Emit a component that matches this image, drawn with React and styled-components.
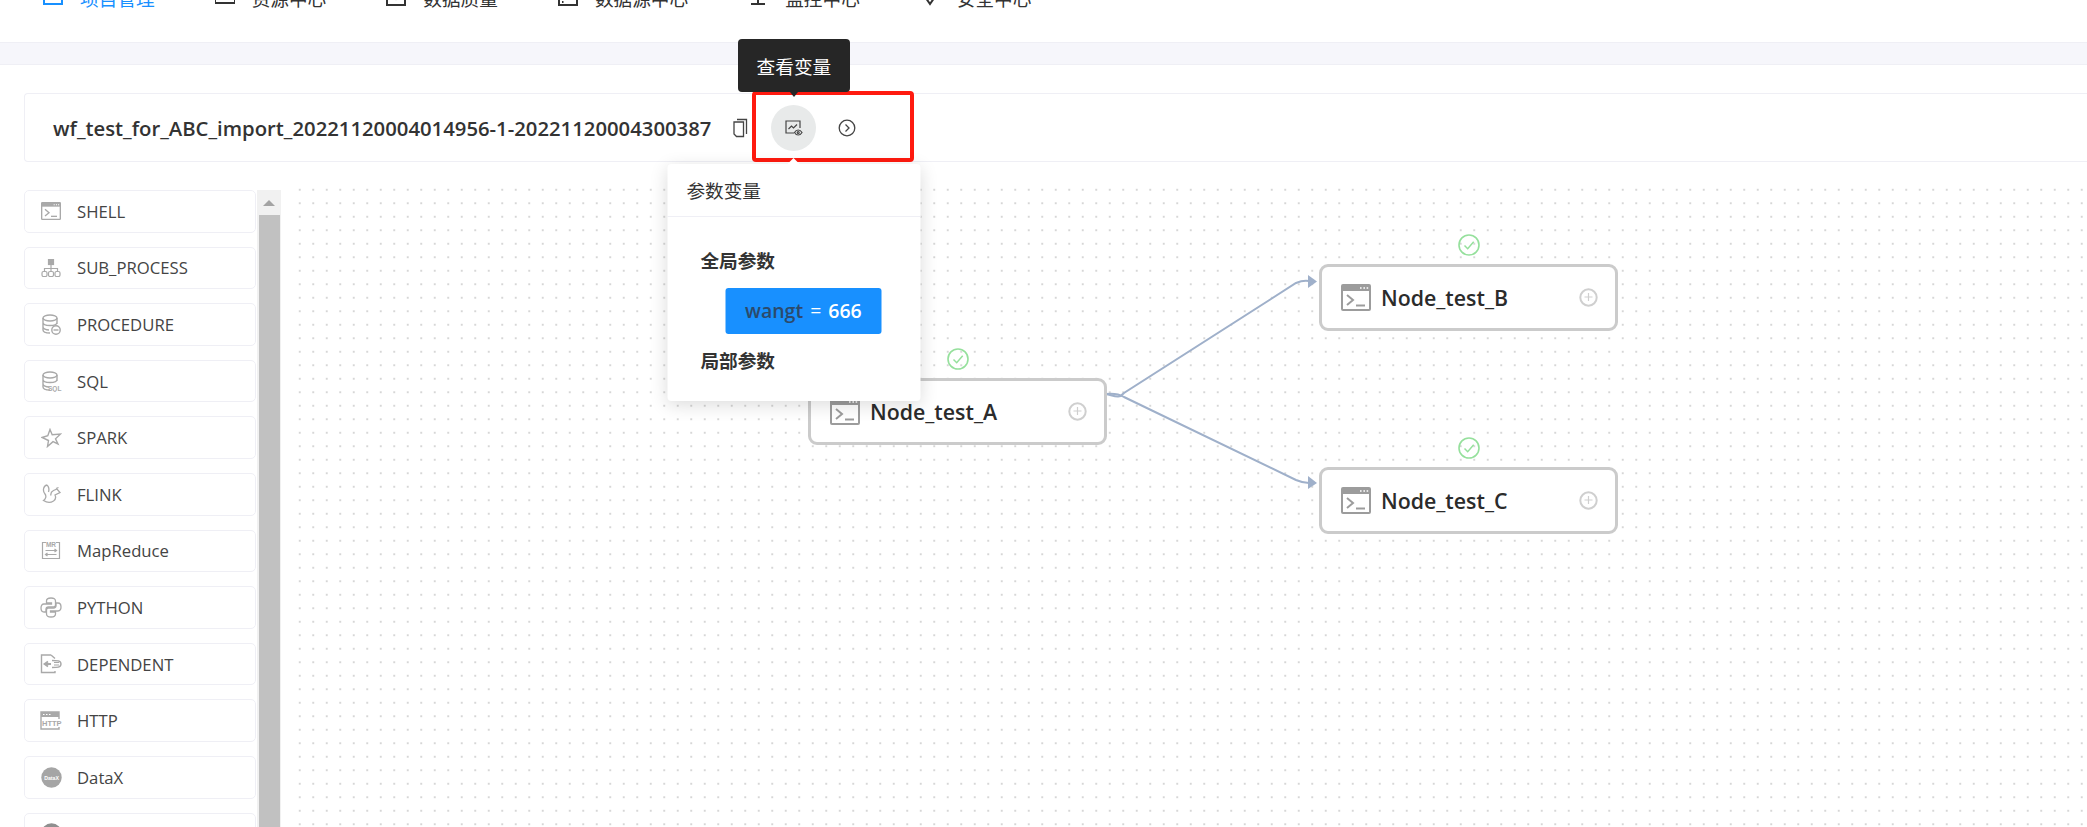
import React from 'react';
import styled, { createGlobalStyle } from 'styled-components';

const GlobalStyle = createGlobalStyle`
    html, body {
        margin: 0;
        background: #fff;
        overflow: hidden;
    }
    * {
        box-sizing: border-box;
    }
`

const FONT = `"Open Sans", "Noto Sans CJK SC", sans-serif`;

const Page = styled.div`
    height: 827px;
    width: 2087px;
    overflow: hidden;
    display: flex;
    flex-direction: column;
    font-family: ${FONT};
    color: #333;
`

const NavBar = styled.nav`
    flex: none;
    height: 42px;
    overflow: hidden;
    display: flex;
    align-items: flex-end;
    gap: 60px;
    padding: 0 0 31px 43px;
`

const NavItem = styled.div`
    display: flex;
    align-items: center;
    gap: 17px;
    height: 24px;
    font-size: 18.67px;
    line-height: 24px;
    white-space: nowrap;
    color: ${p => (p.$active ? '#1890ff' : '#333')};

    svg {
        flex: none;
    }
`

const Strip = styled.div`
    flex: none;
    height: 23px;
    background: #f6f6fb;
    border-top: 1px solid #efeff5;
    border-bottom: 1px solid #efeff5;
`

const Content = styled.main`
    flex: 1;
    min-height: 0;
    display: flex;
    flex-direction: column;
    padding: 28px 0 0 24px;
`

const TitleCard = styled.div`
    position: relative;
    flex: none;
    height: 69px;
    display: flex;
    align-items: center;
    padding-left: 28px;
    border: 1px solid #efeff5;
    border-right: none;
    border-radius: 4px 0 0 4px;
`

const Title = styled.h1`
    margin: 0 19px 0 0;
    font-size: 20.3px;
    font-weight: 600;
    color: #333;
    white-space: nowrap;
`

const RoundButton = styled.div`
    position: relative;
    flex: none;
    width: 45px;
    height: 46px;
    margin-left: ${p => p.$left}px;
    border-radius: 50%;
    display: flex;
    align-items: center;
    justify-content: center;
    background: ${p => (p.$active ? '#e8eaea' : 'transparent')};
`

const Tooltip = styled.div`
    position: absolute;
    z-index: 3;
    left: 50%;
    bottom: calc(100% + 13px);
    transform: translateX(-50%);
    width: 112px;
    height: 53px;
    border-radius: 4px;
    background: #262626;
    color: #fff;
    font-size: 18.67px;
    display: flex;
    align-items: center;
    justify-content: center;
    white-space: nowrap;

    &::after {
        content: '';
        position: absolute;
        left: 50%;
        top: 100%;
        margin-left: -4px;
        border: 4px solid transparent;
        border-top: 5px solid #262626;
    }
`

const Popover = styled.div`
    position: absolute;
    z-index: 4;
    left: 50%;
    top: calc(100% + 13px);
    transform: translateX(-50%);
    width: 253px;
    height: 237px;
    border-radius: 4px;
    background: #fff;
    box-shadow: 0 4px 18px rgba(0, 0, 0, 0.14);

    &::before {
        content: '';
        position: absolute;
        left: 50%;
        bottom: 100%;
        margin-left: -6px;
        border: 6px solid transparent;
        border-top: none;
        border-bottom: 6px solid #fff;
    }
`

const PopoverHeader = styled.div`
    height: 53px;
    padding-left: 19px;
    display: flex;
    align-items: center;
    font-size: 18.67px;
    color: #333;
    border-bottom: 1px solid #efeff5;
`

const PopoverBody = styled.div`
    padding: 26px 0 0 33px;
    display: flex;
    flex-direction: column;
    align-items: flex-start;
`

const ParamHeading = styled.div`
    font-size: 18.67px;
    font-weight: 700;
    line-height: 36px;
    height: 36px;
    margin-top: ${p => p.$top || 0}px;
    color: #333;
`

const ParamTag = styled.div`
    margin: 9px 0 0 25px;
    width: 156px;
    height: 46px;
    border-radius: 3px;
    background: #1890ff;
    display: flex;
    align-items: center;
    justify-content: center;
    gap: 7px;
    font-size: 19.5px;
    font-weight: 600;
    color: #fff;
`

const ParamName = styled.span`
    color: #2c4a6b;
`

const ParamEquals = styled.span`
    font-weight: 400;
`

const RedFrame = styled.div`
    position: absolute;
    z-index: 2;
    left: 727px;
    top: -3px;
    width: 162px;
    height: 71px;
    border: 4px solid #ff1a0f;
    border-radius: 4px;
    pointer-events: none;
`

const Workspace = styled.div`
    flex: 1;
    min-height: 0;
    display: flex;
    margin-top: 21px;
`

const Sidebar = styled.div`
    flex: none;
    width: 232px;
    margin-top: 7px;
    display: flex;
    flex-direction: column;
    gap: 14px;
    overflow: hidden;
`

const TaskItem = styled.div`
    flex: none;
    height: 42.6px;
    display: flex;
    align-items: center;
    gap: 15px;
    padding-left: 15px;
    border: 1px solid #efeff5;
    border-radius: 5px;
    font-size: 16.7px;
    color: #444;
`

const TaskIcon = styled.span`
    flex: none;
    width: 22px;
    height: 22px;
    display: flex;
    align-items: center;
    justify-content: center;
`

const ScrollTrack = styled.div`
    flex: none;
    width: 24px;
    margin: 7px 0 0 1px;
    background: #f1f1f1;
    display: flex;
    flex-direction: column;
    align-items: center;
`

const ScrollArrow = styled.div`
    flex: none;
    height: 25px;
    display: flex;
    align-items: center;
    justify-content: center;

    &::before {
        content: '';
        border: 6px solid transparent;
        border-top: none;
        border-bottom: 6px solid #a3a3a3;
    }
`

const ScrollThumb = styled.div`
    flex: 1;
    width: 21px;
    background: #c1c1c1;
`

const Canvas = styled.div`
    position: relative;
    flex: 1;
    margin-left: 12px;
    background-image: radial-gradient(circle at center, #bcbcbc 0, #cccccc 0.6px, transparent 1px);
    background-size: 13.5px 13.5px;
`

const Edges = styled.svg`
    position: absolute;
    left: 0;
    top: 0;
    width: 100%;
    height: 100%;
`

const Node = styled.div`
    position: absolute;
    left: ${p => p.$x}px;
    top: ${p => p.$y}px;
    width: 299px;
    height: 67px;
    background: #fff;
    border: 3px solid #cbcbcb;
    border-radius: 9px;
    display: flex;
    align-items: center;
    padding: 0 17px 0 19px;
    gap: 10px;
`

const NodeLabel = styled.span`
    flex: 1;
    font-size: 21.33px;
    font-weight: 600;
    color: #2b2b2b;
    white-space: nowrap;
`

const NodeStatus = styled.span`
    position: absolute;
    left: 50%;
    top: -33px;
    margin-left: -11px;
    width: 22px;
    height: 22px;
    display: flex;
`

const ShellIcon = ({ w = 30, h = 27, color = '#9c9c9c' }) => (
    <svg width={w} height={h} viewBox="0 0 30 27" fill="none">
        <rect x="1" y="1" width="28" height="25" rx="1" stroke={color} strokeWidth="2" />
        <rect x="1" y="1" width="28" height="6" fill={color} />
        <path d="M19 4h1.6M22.4 4H24M25.6 4h1.6" stroke="#fff" strokeWidth="1.6" />
        <path d="M6 11l6 5-6 5" stroke={color} strokeWidth="2" />
        <path d="M15 21.5h9" stroke={color} strokeWidth="2" />
    </svg>
)

const PlusCircle = () => (
    <svg width="19" height="19" viewBox="0 0 19 19" fill="none" stroke="#cfcfcf">
        <circle cx="9.5" cy="9.5" r="8.2" strokeWidth="2" />
        <path d="M9.5 5v8M5.5 9h8" strokeWidth="1.2" />
    </svg>
)

const CheckCircle = () => (
    <svg width="22" height="22" viewBox="0 0 22 22" fill="none" stroke="#95e09c">
        <circle cx="11" cy="11" r="10" strokeWidth="1.6" />
        <path d="M6.5 11.5l3.2 3.2 6-7" strokeWidth="1.5" />
    </svg>
)

const GRAY = '#a9a9a9';

const PYTHON_HALF = 'M11 1C8 1 6.500 2 6.500 4V6H11.500V7H4C2 7 1 8.500 1 11C1 13.500 2 15 4 15H6V12.500C6 11 7 10 8.500 10H13.500C14.800 10 15.500 9 15.500 8V4C15.500 2 14 1 11 1Z';

const dbPaths = (
    <>
        <ellipse cx="9" cy="4" rx="7" ry="3" />
        <path d="M2 4v12c0 1.700 3 3 7 3M16 4v6M2 8.500c0 1.700 3 3 7 3s7-1.300 7-3M2 13c0 1.700 3 3 6 3" />
    </>
)

const taskIcons = {
    shell: <ShellIcon w={20} h={18} color={GRAY} />,
    sub: (
        <svg width="20" height="18" viewBox="0 0 20 18" fill="none" stroke={GRAY} strokeWidth="1.200">
            <rect x="7.500" y="0.500" width="5" height="5" fill={GRAY} />
            <path d="M10 5.500v4M3.500 12V9.500h13V12M10 9.500V12" />
            <rect x="1" y="12.500" width="5" height="5" rx="1.500" />
            <rect x="7.500" y="12.500" width="5" height="5" rx="1.500" />
            <rect x="14" y="12.500" width="5" height="5" rx="1.500" />
        </svg>
    ),
    procedure: (
        <svg width="20" height="21" viewBox="0 0 20 21" fill="none" stroke={GRAY} strokeWidth="1.400">
            {dbPaths}
            <circle cx="15" cy="16" r="4.200" fill="#fff" />
            <path d="M12.500 16h5" />
        </svg>
    ),
    sql: (
        <svg width="21" height="21" viewBox="0 0 21 21" fill="none" stroke={GRAY} strokeWidth="1.400">
            {dbPaths}
            <text x="7" y="20" fontSize="6.500" fontWeight="700" fill={GRAY} stroke="none" fontFamily="Liberation Sans, sans-serif">SQL</text>
        </svg>
    ),
    spark: (
        <svg width="21" height="20" viewBox="0 0 21 20" fill="none" stroke={GRAY} strokeWidth="1.400">
            <path d="M9 1.500l2.200 5.300 8.300-0.800-5 4.800 2.500 5.200-5-2.300-5.500 4.800 1-6L1 9.500l5.800-1.800z" />
        </svg>
    ),
    flink: (
        <svg width="21" height="20" viewBox="0 0 21 20" fill="none" stroke={GRAY} strokeWidth="1.300">
            <path d="M6 1C2 2 1.500 7 4 10c1.500 2 1 5-1.500 6.500 3 2 7 2.500 10 0.500 2-1.500 2.500-4 1.500-6l5-2.500-3-3.500-3.500 1.500c-2 1-3 3-2.500 5" />
            <path d="M6 1c2 2 2.500 4 1.500 7M15 4.500l2.500-1" />
        </svg>
    ),
    mr: (
        <svg width="20" height="19" viewBox="0 0 20 19" fill="none" stroke={GRAY} strokeWidth="1.200">
            <path d="M5 1.500H1.500v16h17v-16H15" />
            <text x="10" y="6" fontSize="6.500" fontWeight="700" textAnchor="middle" fill={GRAY} stroke="none" fontFamily="Liberation Sans, sans-serif">MR</text>
            <path d="M4.500 9.500h11M13.500 8l2 1.500-2 1.500M15.500 13.500h-11M6.500 12l-2 1.500 2 1.500" />
        </svg>
    ),
    python: (
        <svg width="22" height="21" viewBox="0 0 22 21" fill="none" stroke={GRAY} strokeWidth="1.300">
            <path d={PYTHON_HALF} />
            <path d={PYTHON_HALF} transform="rotate(180 11 10.500)" />
        </svg>
    ),
    dependent: (
        <svg width="22" height="20" viewBox="0 0 22 20" fill="none" stroke={GRAY} strokeWidth="1.400">
            <path d="M11 1H1.500v17.500H15v-1.500M11 1l4 3.500" />
            <path d="M12 6.500c5 0 9 0 9 3.500s-4 3.500-9 3.500" fill="#fff" />
            <path d="M4.500 10H11M8 7.500L4.500 10 8 12.500" strokeWidth="1.800" />
            <path d="M14 8.500h5M14 11h5" strokeWidth="1" />
        </svg>
    ),
    http: (
        <svg width="22" height="19" viewBox="0 0 22 19" fill="none">
            <path d="M1 1h18v17H1z" stroke={GRAY} strokeWidth="1.400" />
            <rect x="1" y="1" width="18" height="5" fill={GRAY} />
            <path d="M3 3.500h1.500M6 3.500h1.500M9 3.500h1.500" stroke="#fff" strokeWidth="1.200" />
            <rect x="2" y="8" width="20" height="8" fill="#fff" />
            <text x="2" y="15" fontSize="7.500" fontWeight="700" fill={GRAY} fontFamily="Liberation Sans, sans-serif">HTTP</text>
        </svg>
    ),
    datax: (
        <svg width="21" height="21" viewBox="0 0 21 21">
            <circle cx="10.500" cy="10.500" r="10.200" fill="#a5a5a5" />
            <text x="10.500" y="12.500" fontSize="5.200" fontWeight="700" textAnchor="middle" fill="#fff" fontFamily="Liberation Sans, sans-serif">DataX</text>
        </svg>
    ),
    circle: (
        <svg width="21" height="21" viewBox="0 0 21 21">
            <circle cx="10.500" cy="10.500" r="10.200" fill="#8f8f8f" />
        </svg>
    ),
}

const tasks = [
    { name: 'SHELL', icon: 'shell' },
    { name: 'SUB_PROCESS', icon: 'sub' },
    { name: 'PROCEDURE', icon: 'procedure' },
    { name: 'SQL', icon: 'sql' },
    { name: 'SPARK', icon: 'spark' },
    { name: 'FLINK', icon: 'flink' },
    { name: 'MapReduce', icon: 'mr' },
    { name: 'PYTHON', icon: 'python' },
    { name: 'DEPENDENT', icon: 'dependent' },
    { name: 'HTTP', icon: 'http' },
    { name: 'DataX', icon: 'datax' },
    { name: '', icon: 'circle' },
]

const NavIcon = ({ children, color = '#333' }) => (
    <svg width="20" height="20" viewBox="0 0 20 20" fill="none" stroke={color} strokeWidth="2">
        {children}
    </svg>
)

const navItems = [
    { label: '项目管理', active: true, icon: <rect x="1" y="-6" width="18" height="21" /> },
    { label: '资源中心', icon: <rect x="0" y="-6" width="20" height="20" /> },
    { label: '数据质量', icon: <><rect x="1" y="-6" width="18" height="22" /><path d="M4 5l6 5 6-5" /></> },
    { label: '数据源中心', icon: <><rect x="1" y="-6" width="18" height="22" /><path d="M1 10h18" /><path d="M4 13h1.500" /></> },
    { label: '监控中心', icon: <><rect x="0" y="-8" width="20" height="18" /><path d="M10 10v5M3 15h14" /></> },
    { label: '安全中心', icon: <path d="M1 -4v6l9 13 9-13v-6" /> },
]

const App = () => (
    <Page>
        <GlobalStyle />
        <NavBar>
            {navItems.map(item => (
                <NavItem key={item.label} $active={item.active}>
                    <NavIcon color={item.active ? '#1890ff' : '#333'}>{item.icon}</NavIcon>
                    {item.label}
                </NavItem>
            ))}
        </NavBar>
        <Strip />
        <Content>
            <TitleCard>
                <Title>wf_test_for_ABC_import_20221120004014956-1-20221120004300387</Title>
                <svg width="20" height="20" viewBox="0 0 20 20" fill="none" stroke="#444" strokeWidth="1.300">
                    <path d="M7 1.500h9.500V16" />
                    <path d="M4 4h9.500v14.500H6.500L4 16z" />
                </svg>
                <RoundButton $active $left={21}>
                    <svg width="18" height="16" viewBox="0 0 18 16" fill="none" stroke="#444" strokeWidth="1.200">
                        <path d="M9 13H1V1h14v7" />
                        <path d="M3.500 9l3-3 2 2 3.500-3.500" />
                        <path d="M9.500 12.500c1-1.800 2.400-2.500 3.700-2.500s2.800.7 3.800 2.500c-1 1.800-2.500 2.500-3.800 2.500s-2.700-.7-3.700-2.500z" />
                        <circle cx="13.200" cy="12.500" r="1" />
                    </svg>
                    <Tooltip>查看变量</Tooltip>
                    <Popover>
                        <PopoverHeader>参数变量</PopoverHeader>
                        <PopoverBody>
                            <ParamHeading>全局参数</ParamHeading>
                            <ParamTag><ParamName>wangt</ParamName><ParamEquals>=</ParamEquals>666</ParamTag>
                            <ParamHeading $top={9}>局部参数</ParamHeading>
                        </PopoverBody>
                    </Popover>
                </RoundButton>
                <RoundButton $left={8}>
                    <svg width="18" height="18" viewBox="0 0 18 18" fill="none" stroke="#444" strokeWidth="1.300">
                        <circle cx="9" cy="9" r="7.800" />
                        <path d="M7.500 5.500L11 9l-3.500 3.500" />
                    </svg>
                </RoundButton>
                <RedFrame />
            </TitleCard>
            <Workspace>
                <Sidebar>
                    {tasks.map(task => (
                        <TaskItem key={task.icon}>
                            <TaskIcon>{taskIcons[task.icon]}</TaskIcon>
                            {task.name}
                        </TaskItem>
                    ))}
                </Sidebar>
                <ScrollTrack>
                    <ScrollArrow />
                    <ScrollThumb />
                </ScrollTrack>
                <Canvas>
                    <Edges>
                        <g fill="none" stroke="#9fb0ca" strokeWidth="2">
                            <path d="M813 211C822 213 826 216 831 210L1003 100Q1010 97 1016 98" />
                            <path d="M813 211C822 210 826 211 831 214L1003 297Q1010 300 1016 300" />
                        </g>
                        <polygon points="1015,92 1024,98.500 1015,105" fill="#9fb0ca" />
                        <polygon points="1015,293 1024,300 1015,306" fill="#9fb0ca" />
                    </Edges>
                    <Node $x={515} $y={195}>
                        <NodeStatus><CheckCircle /></NodeStatus>
                        <ShellIcon />
                        <NodeLabel>Node_test_A</NodeLabel>
                        <PlusCircle />
                    </Node>
                    <Node $x={1026} $y={81}>
                        <NodeStatus><CheckCircle /></NodeStatus>
                        <ShellIcon />
                        <NodeLabel>Node_test_B</NodeLabel>
                        <PlusCircle />
                    </Node>
                    <Node $x={1026} $y={284}>
                        <NodeStatus><CheckCircle /></NodeStatus>
                        <ShellIcon />
                        <NodeLabel>Node_test_C</NodeLabel>
                        <PlusCircle />
                    </Node>
                </Canvas>
            </Workspace>
        </Content>
    </Page>
);

export default App;
